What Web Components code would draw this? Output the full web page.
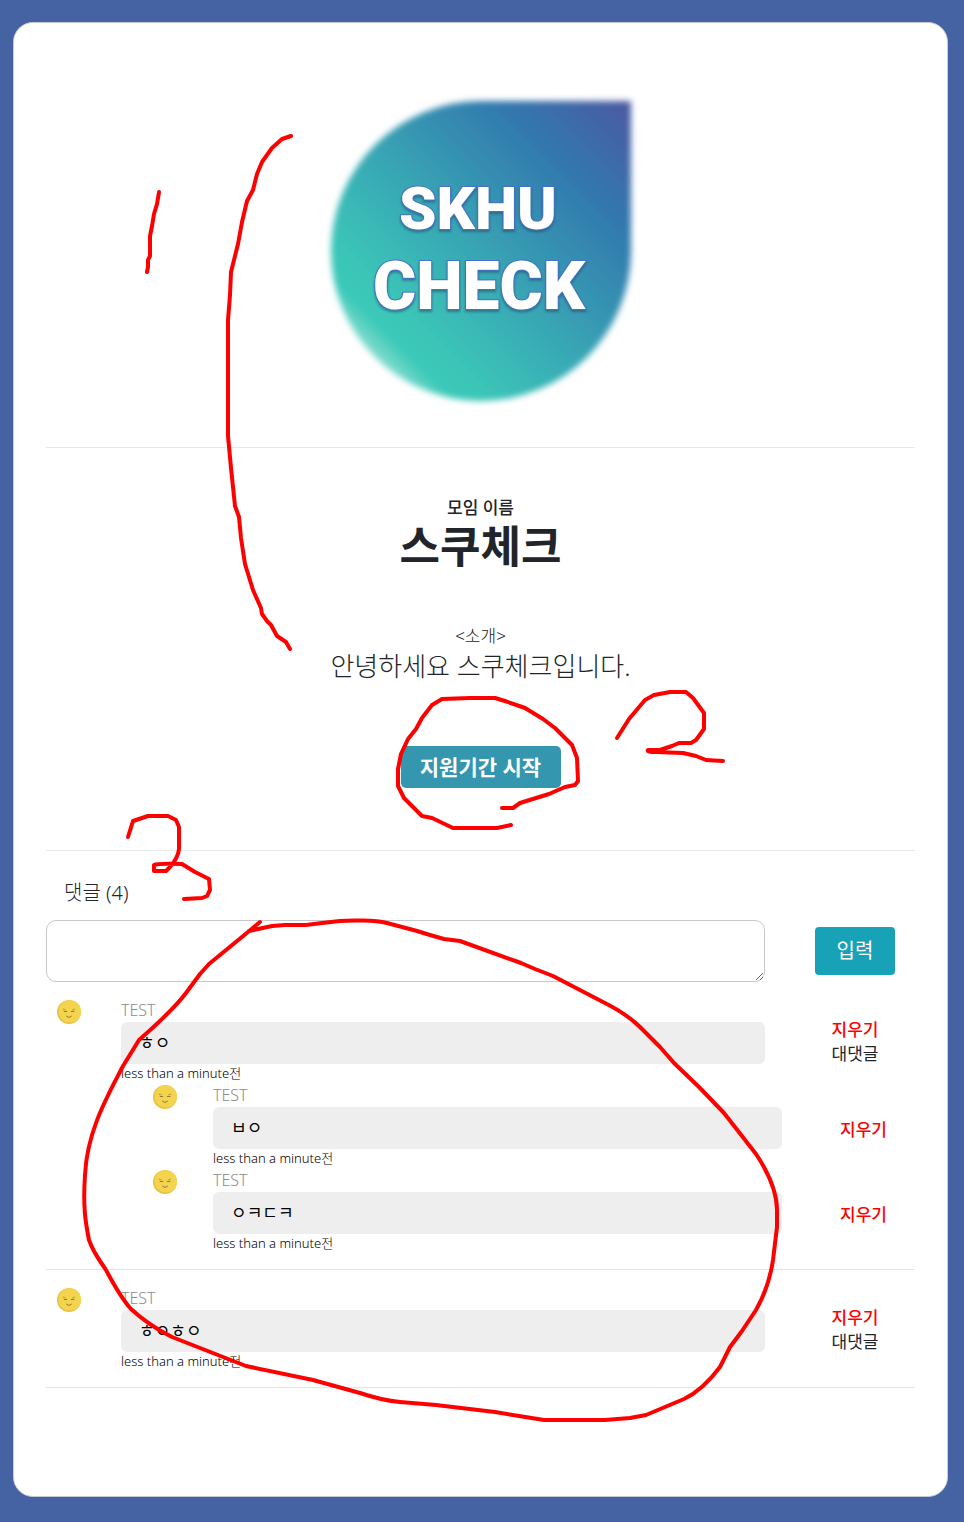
<!DOCTYPE html>
<html lang="ko">
<head>
<meta charset="utf-8">
<meta name="viewport" content="width=device-width, initial-scale=1">
<title>스쿠체크</title>
<style>
  body {
    margin: 0;
    position: relative;
    background: #4562a3;
    color: #212529;
    font: 17px/24px "Noto Sans", "Noto Sans CJK KR", sans-serif;
  }
</style>
</head>
<body>
<page-card>
  <group-logo></group-logo>
  <group-intro>
    <span slot="label">모임 이름</span>
    <span slot="name">스쿠체크</span>
    <span slot="caption">&lt;소개&gt;</span>
    <span slot="text">안녕하세요 스쿠체크입니다.</span>
    <span slot="action">지원기간 시작</span>
  </group-intro>
  <comment-form count="4"></comment-form>
  <comment-thread>
    <comment-item author="TEST" time="less than a minute전">ㅎㅇ</comment-item>
    <comment-item reply author="TEST" time="less than a minute전">ㅂㅇ</comment-item>
    <comment-item reply author="TEST" time="less than a minute전">ㅇㅋㄷㅋ</comment-item>
  </comment-thread>
  <comment-thread>
    <comment-item author="TEST" time="less than a minute전">ㅎㅇㅎㅇ</comment-item>
  </comment-thread>
</page-card>
<pen-marks></pen-marks>

<script>
const define = (name, html, setup) => {
  const template = document.createElement('template');
  template.innerHTML = html;
  customElements.define(name, class extends HTMLElement {
    constructor() {
      super();
      this.attachShadow({ mode: 'open' }).append(template.content.cloneNode(true));
    }
    connectedCallback() {
      if (setup) setup(this, this.shadowRoot);
    }
  });
};

define('page-card', `
  <style>
    :host { display: flow-root; }
    main {
      margin: 22px 16px 25px 13px;
      padding: 77px 32px 108px;
      border: 1px solid #c8ccd2;
      border-radius: 20px;
      background: #fff;
    }
  </style>
  <main><slot></slot></main>`);

define('group-logo', `
  <style>
    :host { display: flex; justify-content: center; padding-bottom: 44px; border-bottom: 1px solid #e6e8ea; }
    svg { display: block; overflow: visible; }
    text { font-family: Roboto, "Open Sans", sans-serif; font-weight: 900; fill: #fff; stroke: #4472c4; stroke-width: 2px; paint-order: stroke; text-anchor: middle; }
  </style>
  <svg width="302" height="303" viewBox="0 0 302 303" role="img" aria-label="SKHU CHECK">
    <defs>
      <linearGradient id="g" x1="0" y1="1" x2="1" y2="0">
        <stop offset="0.14" stop-color="#8fdfd3"/>
        <stop offset="0.205" stop-color="#3bc9b8"/>
        <stop offset="0.26" stop-color="#3bc6b8"/>
        <stop offset="0.5" stop-color="#38a4b4"/>
        <stop offset="0.78" stop-color="#3278ae"/>
        <stop offset="1" stop-color="#4c58a2"/>
      </linearGradient>
      <filter id="soft" x="-5%" y="-5%" width="110%" height="110%"><feGaussianBlur stdDeviation="3"/></filter>
      <filter id="drop" x="-5%" y="-10%" width="110%" height="130%">
        <feDropShadow dx="0" dy="2" stdDeviation="1" flood-color="#1c3d63" flood-opacity="0.5"/>
      </filter>
    </defs>
    <path d="M151 1H301V152A150 150 0 1 1 151 1Z" fill="url(#g)" filter="url(#soft)"/>
    <g filter="url(#drop)">
      <text x="148" y="129" font-size="60">SKHU</text>
      <text x="149" y="209" font-size="66">CHECK</text>
    </g>
  </svg>`);

define('group-intro', `
  <style>
    :host { display: block; padding: 48px 0 62px; border-bottom: 1px solid #e6e8ea; text-align: center; }
    p, h1 { margin: 0; }
    .label { font-weight: 500; }
    h1 { font-size: 44px; line-height: 52px; font-weight: 700; margin-bottom: 52px; }
    .caption { font-weight: 300; }
    .text { font-size: 26px; line-height: 36px; margin-bottom: 62px; font-weight: 300; }
    button {
      display: block; margin: 0 auto; width: 160px; height: 42px; padding: 0;
      border: 0; border-radius: 5px; background: #3596b0; color: #fff;
      font: 700 21px/42px "Noto Sans", "Noto Sans CJK KR", sans-serif;
    }
  </style>
  <p class="label"><slot name="label"></slot></p>
  <h1><slot name="name"></slot></h1>
  <p class="caption"><slot name="caption"></slot></p>
  <p class="text"><slot name="text"></slot></p>
  <button type="button"><slot name="action"></slot></button>`);

define('comment-form', `
  <style>
    :host { display: block; padding-top: 27px; }
    label { display: block; padding-left: 18px; margin-bottom: 12px; font-size: 20px; line-height: 30px; font-weight: 300; }
    form { display: grid; grid-template-columns: 1fr 120px; column-gap: 30px; align-items: center; }
    textarea {
      box-sizing: border-box; display: block; width: 100%; height: 62px; padding: 16px;
      border: 1px solid #c8c8c8; border-radius: 10px; background: #fff; resize: vertical;
      font: inherit; color: inherit;
    }
    button {
      justify-self: center; width: 80px; height: 48px; padding: 0; margin-bottom: 1px;
      border: 0; border-radius: 4px; background: #17a2b8; color: #fff;
      font: 400 20px/48px "Noto Sans", "Noto Sans CJK KR", sans-serif;
    }
  </style>
  <label for="body">댓글 (<span id="count"></span>)</label>
  <form>
    <textarea id="body"></textarea>
    <button type="button">입력</button>
  </form>`, (host, root) => {
  root.getElementById('count').textContent = host.getAttribute('count');
});

define('comment-thread', `
  <style>:host { display: block; padding: 16px 0; border-bottom: 1px solid #e2e4e6; }</style>
  <slot></slot>`);

define('smile-avatar', `
  <style>:host { display: block; } svg { display: block; }</style>
  <svg width="24" height="24" viewBox="0 0 24 24" aria-hidden="true">
    <circle cx="12" cy="12" r="12" fill="#e8c23f"/>
    <circle cx="12.800" cy="11.400" r="11.200" fill="#f4d44e"/>
    <g fill="none" stroke="#8e7a3c" stroke-linecap="round">
      <path d="M6.200 9.200L8.200 9.900M17.600 9.200L15.600 9.900" stroke-width=".7"/>
      <path d="M7.200 11.500H9.800M14.400 11.500H17" stroke-width="1.100"/>
      <path d="M9.500 16.300Q12 19 14.500 16.300" stroke-width="1"/>
    </g>
  </svg>`);

define('comment-item', `
  <style>
    :host { display: grid; grid-template-columns: 75px 1fr 120px; }
    :host([reply]) { margin-left: 96px; grid-template-columns: 71px 1fr 103px; }
    smile-avatar { padding: 2px 0 0 11px; }
    p { margin: 0; }
    .author { font-size: 16px; line-height: 24px; font-weight: 300; color: #8c8c8c; }
    .bubble { padding: 0 18px; border-radius: 6px; background: #eee; color: #000; line-height: 42px; }
    .time { font-size: 13px; line-height: 19px; font-weight: 300; color: #000; }
    .actions { display: flex; flex-direction: column; align-items: center; padding-top: 20px; }
    :host([reply]) .actions { padding-top: 35px; }
    .body { margin-right: 30px; }
    button { padding: 0; border: 0; background: none; color: inherit; font: inherit; }
    .delete { color: #f00; font-weight: 500; }
    :host([reply]) .answer { display: none; }
  </style>
  <smile-avatar></smile-avatar>
  <div class="body">
    <p class="author"></p>
    <p class="bubble"><slot></slot></p>
    <p class="time"></p>
  </div>
  <div class="actions">
    <button type="button" class="delete">지우기</button>
    <button type="button" class="answer">대댓글</button>
  </div>`, (host, root) => {
  root.querySelector('.author').textContent = host.getAttribute('author');
  root.querySelector('.time').textContent = host.getAttribute('time');
});

/* Red pen strokes laid over the whole page: numbers 1-3 and their outlines. */
define('pen-marks', `
  <style>
    :host { position: absolute; top: 0; left: 0; width: 100%; pointer-events: none; }
    svg { display: block; width: 100%; height: auto; }
    path { fill: none; stroke: #f00; stroke-width: 4; stroke-linecap: round; stroke-linejoin: round; }
  </style>
  <svg viewBox="0 0 964 1522" aria-hidden="true">
    <path d="M159 192L157 204 154 214 152 226 150 236V256L148 260V267L147 272"/>
    <path d="M291 136L282 139 272 148 262 162 257 174 253 190 247 201 242 222 238 244 231 272 230 295 228 320V436L231 468 235 506 239 517 241 538 245 564 253 590 261 608 262 614 267 621 271 625 277 636 286 642 290 649"/>
    <path d="M617 738L629 719 645 700 654 695 670 692 686 692 693 698 704 713V729L696 740 691 743 679 743 672 746 660 750H648Q646 752 656 752L683 753 696 756 706 760 723 761"/>
    <path d="M511 825L497 828H453L432 818 422 816 404 798 398 786V769L401 754 408 739 416 729 422 718 432 705 442 699 470 698H495L505 701 525 708 543 719 555 728 572 745 577 758 578 781 575 785 565 787 549 794 520 803 513 808H502"/>
    <path d="M128 837L133 821 148 816H168L176 820 179 827V849Q178 858 170 867L166 871H154V865Q158 863 182 864L195 872 209 879 210 890 207 896 202 898 184 899"/>
    <path d="M260 922L248 932 209 964 200 974 186 993C174 1009 155 1026 139 1040L123 1066C108 1095 87 1131 85 1175C83 1205 85 1220 89 1240C94 1254 99 1259 106 1270C114 1285 121 1298 131 1309C145 1322 158 1330 172 1337L246 1366 313 1380 360 1393C375 1398 388 1401 400 1402L436 1405 495 1412 519 1416 544 1420H605L630 1418 646 1415 684 1399C699 1392 711 1379 720 1367L730 1347 742 1331 756 1310C764 1296 770 1280 773 1260L777 1227V1210C777 1191 766 1169 756 1154L724 1113 699 1087 674 1063 660 1047 640 1027C630 1017 617 1009 603 1002L553 976 535 969 521 963 460 941 444 939 430 935 417 931 387 923C375 920 350 920 340 921L322 923 306 925H285L272 926 249 931"/>
  </svg>`);
</script>
</body>
</html>
